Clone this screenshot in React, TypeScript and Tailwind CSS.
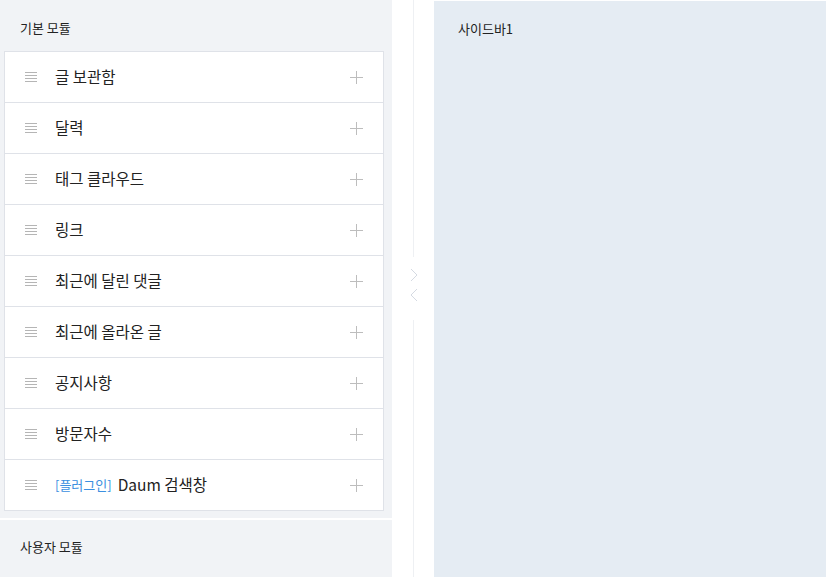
import React from 'react';

const modules = [
  { name: '글 보관함' },
  { name: '달력' },
  { name: '태그 클라우드' },
  { name: '링크' },
  { name: '최근에 달린 댓글' },
  { name: '최근에 올라온 글' },
  { name: '공지사항' },
  { name: '방문자수' },
  { name: 'Daum 검색창', plugin: true },
];

const Handle = () => (
  <svg width="12" height="10" viewBox="0 0 12 10" className="shrink-0">
    <g stroke="#b5b5b5" strokeWidth="1">
      <line x1="0" y1="0.5" x2="12" y2="0.5" />
      <line x1="0" y1="3.5" x2="12" y2="3.5" />
      <line x1="0" y1="6.5" x2="12" y2="6.5" />
      <line x1="0" y1="9.5" x2="12" y2="9.5" />
    </g>
  </svg>
);

const Plus = () => (
  <svg width="13" height="13" viewBox="0 0 13 13" className="shrink-0">
    <g stroke="#bdbdbd" strokeWidth="1">
      <line x1="6.5" y1="0" x2="6.5" y2="13" />
      <line x1="0" y1="6.5" x2="13" y2="6.5" />
    </g>
  </svg>
);

export default function App() {
  return (
    <div
      className="flex w-[826px] h-[577px] overflow-hidden bg-white text-[#222]"
      style={{ fontFamily: '"Noto Sans CJK KR", "Noto Sans", sans-serif' }}
    >
      {/* 모듈 목록 */}
      <div className="w-[392px] flex flex-col shrink-0">
        <div className="bg-[#f1f3f6] pt-[1px] pl-[4px] pr-[8px] pb-[7px]">
          <div className="h-[50px] flex items-center pl-[16px] pt-[3px] text-[13px]">기본 모듈</div>
          <div className="bg-white border border-[#dfe2e8]">
            {modules.map((m, i) => (
              <div
                key={m.name}
                className={`flex items-center pl-[20px] pr-[20px] ${i > 0 ? 'h-[51px] border-t border-[#dfe2e8]' : 'h-[50px]'}`}
              >
                <Handle />
                <div className="ml-[18px] flex-1 text-[15.5px] flex items-center">
                  {m.plugin && <span className="text-[#3b8fe0] text-[13px] mr-[6px]">[플러그인]</span>}
                  {m.name}
                </div>
                <Plus />
              </div>
            ))}
          </div>
        </div>
        <div className="mt-[2px] flex-1 bg-[#f1f3f6] pr-[8px]">
          <div className="h-[54px] flex items-center pl-[20px] text-[13px]">사용자 모듈</div>
        </div>
      </div>

      {/* 구분선 */}
      <div className="w-[42px] shrink-0 flex flex-col items-center">
        <div className="h-[257px] w-px bg-[#eef0f3] ml-[1px]" />
        <div className="h-[63px] flex flex-col items-center pt-[11px] gap-[6px] ml-[1px]">
          <svg width="8" height="14" viewBox="0 0 8 14">
            <path d="M1 1 L7 7 L1 13" fill="none" stroke="#d5dae2" strokeWidth="1" />
          </svg>
          <svg width="8" height="14" viewBox="0 0 8 14">
            <path d="M7 1 L1 7 L7 13" fill="none" stroke="#d5dae2" strokeWidth="1" />
          </svg>
        </div>
        <div className="flex-1 w-px bg-[#eef0f3] ml-[1px]" />
      </div>

      {/* 사이드바 */}
      <div className="flex-1 mt-[1px] bg-[#e5ecf3]">
        <div className="pl-[24px] pt-[18px] text-[13px]">사이드바1</div>
      </div>
    </div>
  );
}
